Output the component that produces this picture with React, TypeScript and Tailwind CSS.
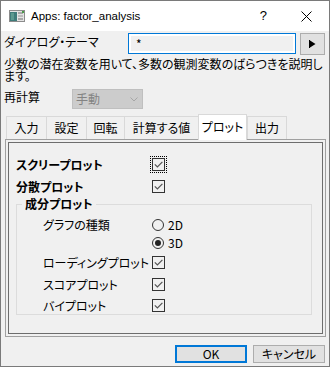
import React from "react";

function Check({ focus }: { focus?: boolean }) {
  return (
    <span
      className={`flex h-[13px] w-[13px] items-center justify-center border border-[#333333] bg-[#f0f0f0] ${
        focus ? "outline-1 outline-dotted outline-black outline-offset-1" : ""
      }`}
    >
      <svg width="11" height="11" viewBox="0 0 11 11">
        <path d="M1.8 5.4 L4.4 8 L9.4 2.8" fill="none" stroke="#555555" strokeWidth="1.2" />
      </svg>
    </span>
  );
}

function Radio({ on }: { on?: boolean }) {
  return (
    <span className="flex h-[12px] w-[12px] items-center justify-center rounded-full border border-[#333333] bg-[#f0f0f0]">
      {on && <span className="h-[6px] w-[6px] rounded-full bg-[#222222]" />}
    </span>
  );
}

const tabs = [
  { label: "入力", w: "w-[40px]" },
  { label: "設定", w: "w-[40px]" },
  { label: "回転", w: "w-[38px]" },
  { label: "計算する値", w: "w-[74px]" },
  { label: "プロット", w: "w-[49px]", active: true },
  { label: "出力", w: "w-[40px]" },
];

export default function App() {
  return (
    <div className="flex h-[367px] w-[330px] flex-col border border-[#7a7a7a] bg-[#f0f0f0] font-['Noto_Sans_CJK_JP',sans-serif] text-[12px] text-black [font-feature-settings:'palt']">
      {/* Title bar */}
      <div className="flex h-[30px] items-center bg-white pl-[8px]">
        <svg width="16" height="12" viewBox="0 0 16 12">
          <rect x="0.5" y="0.5" width="15" height="11" fill="#e4e4e4" stroke="#8c8c8c" />
          <rect x="1" y="2" width="7" height="9" fill="#3f7c7a" />
          <rect x="2" y="3" width="3" height="7" fill="#5d9a8f" />
          <rect x="9" y="2" width="5" height="2" fill="#a8a8a8" />
          <rect x="9" y="5" width="5" height="2" fill="#bdbdbd" />
          <rect x="9" y="8" width="5" height="2" fill="#a8a8a8" />
          <rect x="13" y="1" width="2" height="2" fill="#4a9a4a" />
        </svg>
        <span className="ml-[6px] font-['Liberation_Sans',sans-serif] text-[11.5px] leading-[14px]">
          Apps: factor_analysis
        </span>
        <span className="ml-auto font-['Liberation_Sans',sans-serif] text-[13px] leading-[14px]">?</span>
        <svg className="ml-[34px] mr-[17px]" width="11" height="11" viewBox="0 0 11 11">
          <path d="M0.5 0.5 L10.5 10.5 M10.5 0.5 L0.5 10.5" stroke="#000000" strokeWidth="1" />
        </svg>
      </div>

      {/* Dialog theme row */}
      <div className="mt-[2px] flex h-[22px] items-start">
        <div className="w-[127px] pl-[3px] pt-[2px] leading-[14px]">ダイアログ・テーマ</div>
        <div className="h-[21px] w-[168px] border border-[#0078d7] bg-white p-[2px]">
          <div className="flex h-full items-center bg-[#f0f0f0] pl-[5px] leading-[12px]">*</div>
        </div>
        <div className="ml-[4px] flex h-[22px] w-[25px] items-center justify-center border border-[#adadad] bg-[#e1e1e1]">
          <svg width="7" height="8" viewBox="0 0 7 8">
            <rect x="0" y="0" width="1" height="8" fill="#000000" />
            <path d="M1 0.5 L6.5 4 L1 7.5 Z" fill="#000000" />
          </svg>
        </div>
      </div>

      {/* Description */}
      <div className="mt-[3px] whitespace-nowrap px-[3px] leading-[12px]">
        少数の潜在変数を用いて、多数の観測変数のばらつきを説明し
        <br />
        ます。
      </div>

      {/* Recalculate */}
      <div className="mt-[7px] flex h-[20px] items-start">
        <div className="w-[71px] pl-[3px] pt-[1px] leading-[14px]">再計算</div>
        <div className="flex h-[20px] w-[71px] items-center border border-[#bfbfbf] bg-[#cccccc] pl-[3px] leading-[14px] text-[#838383]">
          手動
          <svg className="ml-auto mr-[4px]" width="8" height="5" viewBox="0 0 8 5">
            <path d="M0.5 0.5 L4 4 L7.5 0.5" fill="none" stroke="#a6a6a6" strokeWidth="1" />
          </svg>
        </div>
      </div>

      {/* Tabs */}
      <div className="mt-[5px] flex h-[25px] items-end pl-[5px]">
        {tabs.map((t, i) =>
          t.active ? (
            <div
              key={t.label}
              className={`relative z-10 -mb-px flex h-[26px] ${t.w} items-center justify-center border-x border-t border-[#d9d9d9] bg-white pb-[1px] leading-[14px]`}
            >
              {t.label}
            </div>
          ) : (
            <div
              key={t.label}
              className={`flex h-[23px] ${t.w} items-center justify-center border-t border-l border-[#d9d9d9] leading-[14px] ${
                i === tabs.length - 1 ? "border-r" : ""
              }`}
            >
              {t.label}
            </div>
          )
        )}
      </div>

      {/* Tab page */}
      <div className="ml-[4px] h-[198px] w-[321px] border border-[#a0a0a0] p-[2px]">
        <div className="flex h-full flex-col border border-[#6d6d6d]">
          <div className="mt-[15px] flex h-[13px] items-center pl-[7px]">
            <div className="w-[136px] font-bold leading-[14px]">スクリープロット</div>
            <Check focus />
          </div>
          <div className="mt-[9px] flex h-[13px] items-center pl-[7px]">
            <div className="w-[136px] font-bold leading-[14px]">分散プロット</div>
            <Check />
          </div>

          {/* Group box */}
          <div className="relative ml-[7px] mt-[11px] w-[296px] border border-[#dcdcdc] pb-[2px] pt-[14px]">
            <div className="absolute -top-[8px] left-[5px] bg-[#f0f0f0] px-[3px] font-bold leading-[14px]">
              成分プロット
            </div>
            <div className="flex pl-[26px]">
              <div className="w-[109px] leading-[12px]">グラフの種類</div>
              <div className="flex flex-col gap-[6px]">
                <div className="flex h-[12px] items-center gap-[4px]">
                  <Radio />
                  <span className="leading-[12px]">2D</span>
                </div>
                <div className="flex h-[12px] items-center gap-[4px]">
                  <Radio on />
                  <span className="leading-[12px]">3D</span>
                </div>
              </div>
            </div>
            <div className="mt-[7px] flex h-[13px] items-center pl-[26px]">
              <div className="w-[109px] leading-[14px]">ローディングプロット</div>
              <Check />
            </div>
            <div className="mt-[9px] flex h-[13px] items-center pl-[26px]">
              <div className="w-[109px] leading-[14px]">スコアプロット</div>
              <Check />
            </div>
            <div className="mt-[8px] flex h-[13px] items-center pl-[26px]">
              <div className="w-[109px] leading-[14px]">バイプロット</div>
              <Check />
            </div>
          </div>
        </div>
      </div>

      {/* Buttons */}
      <div className="mt-[8px] flex justify-end gap-[6px] pr-[4px]">
        <div className="flex h-[18px] w-[72px] items-center justify-center border-2 border-[#0078d7] bg-[#e1e1e1] leading-[14px]">
          OK
        </div>
        <div className="flex h-[18px] w-[72px] items-center justify-center border border-[#adadad] bg-[#e1e1e1] leading-[14px]">
          キャンセル
        </div>
      </div>
    </div>
  );
}
